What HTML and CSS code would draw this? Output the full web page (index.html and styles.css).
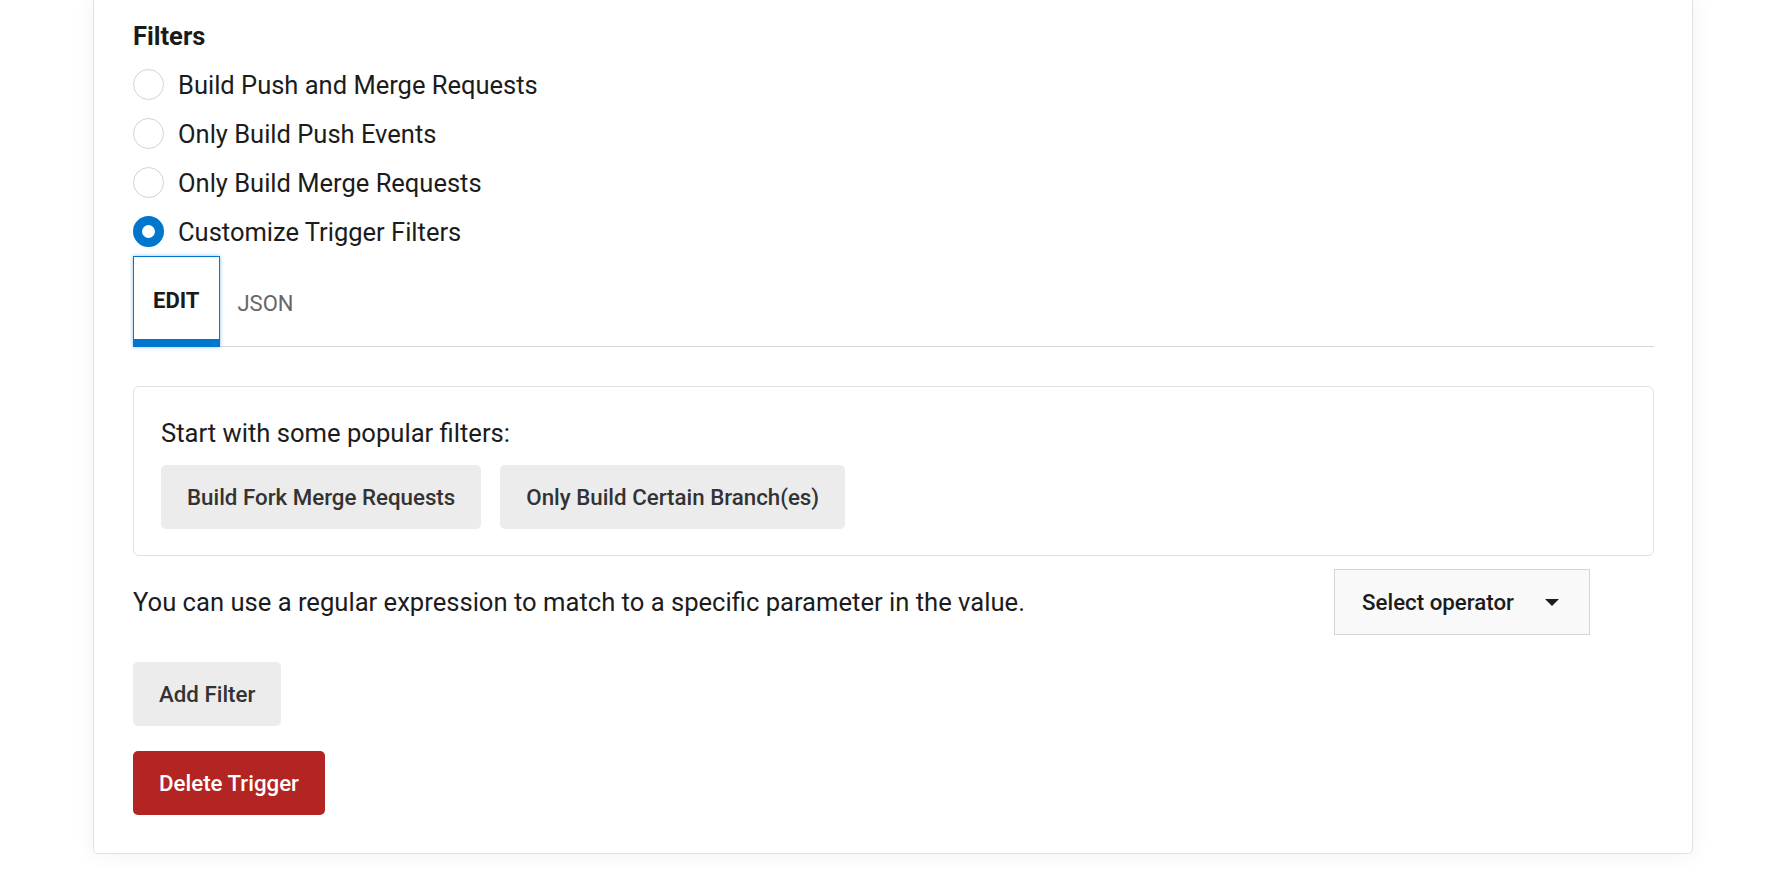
FILE: index.html
```html
<!DOCTYPE html>
<html>
<head>
<meta charset="utf-8">
<link rel="stylesheet" href="styles.css">
</head>
<body>
<div class="card">
  <h3 class="heading">Filters</h3>
  <div class="radios">
    <label class="radio-row"><span class="radio"></span><span class="radio-label">Build Push and Merge Requests</span></label>
    <label class="radio-row"><span class="radio"></span><span class="radio-label">Only Build Push Events</span></label>
    <label class="radio-row"><span class="radio"></span><span class="radio-label">Only Build Merge Requests</span></label>
    <label class="radio-row"><span class="radio checked"></span><span class="radio-label">Customize Trigger Filters</span></label>
  </div>
  <div class="tabs">
    <div class="tab active">EDIT</div>
    <div class="tab">JSON</div>
  </div>
  <div class="popular">
    <div class="popular-title">Start with some popular filters:</div>
    <div class="popular-buttons">
      <button class="btn">Build Fork Merge Requests</button>
      <button class="btn">Only Build Certain Branch(es)</button>
    </div>
  </div>
  <div class="regex-row">
    <div class="regex-text">You can use a regular expression to match to a specific parameter in the value.</div>
    <div class="select">
      <span class="select-text">Select operator</span>
      <span class="caret"></span>
    </div>
  </div>
  <div class="actions">
    <button class="btn">Add Filter</button>
    <button class="btn danger">Delete Trigger</button>
  </div>
</div>
</body>
</html>
```

FILE: styles.css
```css
* { box-sizing: border-box; }
html, body { margin: 0; padding: 0; background: #ffffff; }
body {
  font-family: Roboto, "Liberation Sans", sans-serif;
  color: #1c1c1c;
  height: 873px;
  overflow: hidden;
}
.card {
  margin-left: 93px;
  width: 1600px;
  background: #fff;
  border: 1px solid #e1e1e1;
  border-top: 0;
  border-radius: 0 0 5px 5px;
  box-shadow: 0 0 22px rgba(0,0,0,0.06);
  padding: 22px 38px 38px 39px;
}
.heading {
  margin: 0;
  font-size: 25.5px;
  font-weight: 700;
  line-height: 29px;
  color: #1a1a1a;
}
.radios {
  margin-top: 9px;
  display: flex;
  flex-direction: column;
}
.radio-row {
  height: 49px;
  display: flex;
  align-items: center;
  gap: 14px;
}
.radio {
  width: 31px;
  height: 31px;
  border-radius: 50%;
  border: 1px solid #d3d3d3;
  background: #fff;
  flex: none;
}
.radio.checked {
  border: 9.5px solid #0077cc;
}
.radio-label {
  font-size: 25.5px;
  color: #1c1c1c;
}
.tabs {
  display: flex;
  border-bottom: 1px solid #d6d6d6;
}
.tab {
  height: 91px;
  padding: 4px 18px 0 16px;
  display: flex;
  align-items: center;
  font-size: 22px;
  color: #666;
  border: 1px solid transparent;
  margin-bottom: -1px;
}
.tab.active {
  font-weight: 700;
  color: #1a1a1a;
  padding: 4px 20px 0 19px;
  border: 1px solid #0077cc;
  border-bottom: 8px solid #0077cc;
  box-shadow: 0 0 4px rgba(0,119,204,0.45);
}
.popular {
  margin-top: 39px;
  border: 1px solid #e0e0e0;
  border-radius: 6px;
  padding: 31px 27px 26px 27px;
}
.popular-title {
  font-size: 25.6px;
  line-height: 30px;
  color: #1c1c1c;
}
.popular-buttons {
  margin-top: 17px;
  display: flex;
  gap: 19px;
}
.btn {
  font-family: Roboto, "Liberation Sans", sans-serif;
  font-size: 22.3px;
  font-weight: 500;
  color: #333;
  background: #ececec;
  border: 0;
  border-radius: 5px;
  height: 64px;
  padding: 0 26px;
  cursor: pointer;
}
.btn.danger {
  background: #b22522;
  color: #fff;
}
.regex-row {
  margin-top: 13px;
  display: flex;
  align-items: center;
  padding-right: 64px;
}
.regex-text {
  flex: 1;
  font-size: 25.6px;
  color: #1c1c1c;
}
.select {
  width: 256px;
  height: 66px;
  background: #f9f9f9;
  border: 1px solid #d6d6d6;
  display: flex;
  align-items: center;
  padding-left: 27px;
}
.select-text {
  font-size: 22.3px;
  font-weight: 500;
  color: #1c1c1c;
}
.caret {
  margin-left: 31px;
  width: 0;
  height: 0;
  border-left: 7px solid transparent;
  border-right: 7px solid transparent;
  border-top: 7px solid #1c1c1c;
}
.actions {
  margin-top: 27px;
  display: flex;
  flex-direction: column;
  align-items: flex-start;
  gap: 25px;
}
```
